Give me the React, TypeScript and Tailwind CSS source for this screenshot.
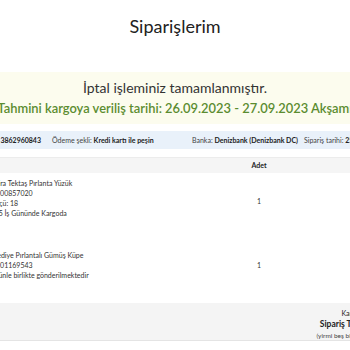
import React from "react";

const font = { fontFamily: "Lato, 'Noto Sans', sans-serif" };

export default function App() {
  return (
    <div className="w-[350px] h-[350px] overflow-hidden bg-white text-[#222]" style={font}>
      <div className="h-[52px] pt-[14px] flex justify-center">
        <h1 className="text-[18px] leading-[24px] font-normal text-[#222]">Siparişlerim</h1>
      </div>
      <div className="mt-[20px] h-[52px] bg-[#fcfcee] flex flex-col items-center pt-[7px]">
        <div className="w-full flex justify-center whitespace-nowrap text-[14px] leading-[18px] text-[#333]">
          İptal işleminiz tamamlanmıştır.
        </div>
        <div className="w-full flex justify-center whitespace-nowrap text-[12.9px] leading-[18px] mt-[2px] font-semibold text-[#5b8c30]">
          Tahmini kargoya veriliş tarihi: 26.09.2023 - 27.09.2023 Akşamı
        </div>
      </div>
      <div className="mt-[7px] h-[18px] bg-[#e9f1fa] flex items-center whitespace-nowrap text-[7px] text-[#222]">
        <div className="w-[52px] shrink-0 flex justify-end pr-[11px]">
          <span className="font-bold">Sipariş No: 3862960843</span>
        </div>
        <div className="w-[140px] shrink-0">
          <span className="text-[#444]">Ödeme şekli: </span>
          <span className="font-bold">Kredi kartı ile peşin</span>
        </div>
        <div className="w-[112px] shrink-0">
          <span className="text-[#444]">Banka: </span>
          <span className="font-bold">Denizbank (Denizbank DC)</span>
        </div>
        <div className="shrink-0">
          <span className="text-[#444]">Sipariş tarihi: </span>
          <span className="font-bold">25.09.2023</span>
        </div>
      </div>
      <div className="mt-[8px] border-t border-[#ececec] h-[16px] bg-[#f5f5f5] flex items-center text-[7px] font-bold">
        <div className="w-[240px] shrink-0" />
        <div className="w-[38px] shrink-0 text-center">Adet</div>
      </div>
      <div className="flex h-[73px] pt-[5px] text-[7px] leading-[10px] text-[#333]">
        <div className="w-[240px] shrink-0 ml-[-8px] whitespace-nowrap">
          <div>Mira Tektaş Pırlanta Yüzük</div>
          <div>1200857020</div>
          <div>Ölçü: 18</div>
          <div>1-5 İş Gününde Kargoda</div>
        </div>
        <div className="w-[38px] shrink-0 text-center ml-[8px] pt-[18px]">1</div>
      </div>
      <div className="flex h-[57px] pt-[4px] text-[7px] leading-[10px] text-[#333]">
        <div className="w-[240px] shrink-0 ml-[-8px] whitespace-nowrap">
          <div>Hediye Pırlantalı Gümüş Küpe</div>
          <div>1201169543</div>
          <div>ürünle birlikte gönderilmektedir</div>
        </div>
        <div className="w-[38px] shrink-0 text-center ml-[8px] pt-[10px]">1</div>
      </div>
      <div className="h-[38px] bg-[#f4f4f4] border-b border-[#e4e4e4] flex whitespace-nowrap">
        <div className="w-[300px] shrink-0" />
        <div className="w-[150px] shrink-0 flex flex-col items-center pt-[5px] text-[#222]">
          <div className="text-[7px] leading-[10px]">Kargo Ücreti: Ücretsiz</div>
          <div className="text-[8.5px] leading-[13px] font-bold">Sipariş Toplamı: 25.490,00 TL</div>
          <div className="text-[6.5px] leading-[9px] text-[#444]">(yirmi beş bin dört yüz doksan Türk Lirası)</div>
        </div>
      </div>
    </div>
  );
}
